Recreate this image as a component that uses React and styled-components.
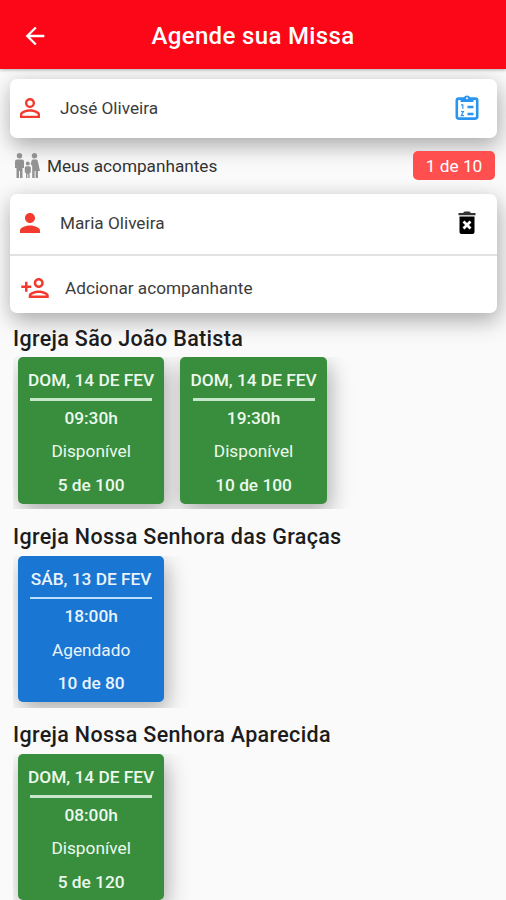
import React from "react";
import styled, { createGlobalStyle } from "styled-components";
import {
  MdArrowBack,
  MdPersonOutline,
  MdPerson,
  MdOutlinePersonAdd,
} from "react-icons/md";

const GlobalStyle = createGlobalStyle`
  * {
    box-sizing: border-box;
  }

  body {
    margin: 0;
    background: #fafafa;
    font-family: Roboto, "Liberation Sans", sans-serif;
    overflow: hidden;
  }
`;

const Page = styled.div`
  height: 900px;
  overflow: hidden;
  background: #fafafa;
`;

const Header = styled.header`
  position: relative;
  z-index: 1;
  height: 69px;
  padding: 2px 21px 0;
  display: grid;
  grid-template-columns: 28px 1fr 28px;
  align-items: center;
  background: #fc0718;
  color: #ffffff;
  box-shadow: 0 1px 3px rgba(0, 0, 0, 0.3);

  svg {
    display: block;
  }
`;

const Title = styled.h1`
  margin: 0;
  font-size: 24px;
  line-height: 28px;
  font-weight: 500;
  letter-spacing: 0.35px;
  text-align: center;
`;

const People = styled.div`
  padding: 10px 9px 0 10px;
`;

const Card = styled.div`
  border-radius: 7px;
  background: #ffffff;
  box-shadow: 2px 9px 22px rgba(0, 0, 0, 0.25), 0 2px 20px rgba(0, 0, 0, 0.1);
`;

const Row = styled.div`
  height: ${({ $height }) => $height}px;
  padding: ${({ $top }) => $top || 0}px 18px ${({ $bottom }) => $bottom || 0}px
    ${({ $indent }) => $indent}px;
  display: flex;
  align-items: center;
  gap: 15px;
  color: #3c3c3c;

  & + & {
    border-top: 2px solid #e2e2e2;
  }

  svg {
    flex: none;
  }
`;

const Name = styled.span`
  flex: 1;
  font-size: 17.2px;
`;

const Companions = styled.div`
  position: relative;
  height: 56px;
  padding: 0 2px 1px 4px;
  display: flex;
  align-items: center;
  gap: 7px;
  font-size: 17.2px;
  color: #333333;
`;

const Badge = styled.span`
  width: 82px;
  height: 29px;
  margin-left: auto;
  border-radius: 5px;
  display: flex;
  align-items: center;
  justify-content: center;
  background: #ff4f4f;
  color: #ffffff;
  font-size: 17.3px;
`;

const Churches = styled.main`
  padding: 10.9px 0 0 13px;
`;

const Church = styled.section`
  height: 198.3px;
`;

const ChurchName = styled.h2`
  position: relative;
  margin: 0;
  height: 33.5px;
  line-height: 29px;
  font-size: 21.5px;
  font-weight: 500;
  letter-spacing: 0.33px;
  color: #1c1c1c;
`;

const Slots = styled.div`
  width: 493px;
  height: 152px;
  padding: 0 5px;
  display: flex;
  gap: 16.1px;
  overflow: hidden;
`;

const Slot = styled.div`
  width: 146.3px;
  height: 146.3px;
  padding: 13px 12px 0;
  flex: none;
  display: flex;
  flex-direction: column;
  align-items: center;
  border-radius: 5px;
  background: ${({ $booked }) => ($booked ? "#1976d2" : "#388e3c")};
  color: ${({ $booked }) => ($booked ? "#e9f4fd" : "#edf9ee")};
  box-shadow: 4px 9px 22px rgba(0, 0, 0, 0.27), 0 2px 16px rgba(0, 0, 0, 0.06);
  font-size: 17.3px;
  line-height: 21px;
  white-space: nowrap;
`;

const Day = styled.div`
  font-weight: 500;
`;

const Rule = styled.div`
  width: 122px;
  height: 2.6px;
  margin: 7px 0;
  background: ${({ $booked }) => ($booked ? "#bbdefb" : "#c8e6c9")};
`;

const Time = styled.div`
  font-weight: 500;
`;

const Status = styled.div`
  margin: 12.5px 0;
`;

const Seats = styled.div`
  font-weight: 500;
`;

const churches = [
  {
    name: "Igreja São João Batista",
    slots: [
      { day: "DOM, 14 DE FEV", time: "09:30h", seats: "5 de 100" },
      { day: "DOM, 14 DE FEV", time: "19:30h", seats: "10 de 100" },
    ],
  },
  {
    name: "Igreja Nossa Senhora das Graças",
    slots: [
      { day: "SÁB, 13 DE FEV", time: "18:00h", seats: "10 de 80", booked: true },
    ],
  },
  {
    name: "Igreja Nossa Senhora Aparecida",
    slots: [{ day: "DOM, 14 DE FEV", time: "08:00h", seats: "5 de 120" }],
  },
];

const ClipboardIcon = () => (
  <svg width="24" height="26" viewBox="0 0 24 26" fill="none">
    <rect x="1.8" y="3.6" width="20.4" height="20" rx="2" stroke="#2a95f0" strokeWidth="2.6" />
    <path d="M5.500 3h3.300a3.300 3.300 0 0 1 6.400 0H18.500V7h-13z" fill="#2a95f0" />
    <circle cx="12" cy="3.200" r="1" fill="#fff" />
    <path d="M12.500 12h6M12.500 19h6" stroke="#2a95f0" strokeWidth="2.400" />
    <path d="M6 9.800h1.800v4M6 16.700h2.400l-2.200 4h2.800" stroke="#2a95f0" strokeWidth="1.200" />
  </svg>
);

const TrashIcon = () => (
  <svg width="24" height="24" viewBox="-3 0 24 24">
    <path d="M.5 2H5l1.500-1.500h5L13 2h4.500v2.200H.5z" fill="#333" />
    <path d="M1.500 5.500h15V21a2 2 0 0 1-2 2h-11a2 2 0 0 1-2-2z" fill="#000" />
    <path d="M5.500 10.500l7 7M12.500 10.500l-7 7" stroke="#fff" strokeWidth="2.800" />
  </svg>
);

const FamilyIcon = () => (
  <svg width="26" height="26" viewBox="0 0 26 26" fill="#929292">
    <circle cx="5.500" cy="2.800" r="2.700" />
    <path d="M3 6.500h5a2 2 0 0 1 2 2V15H8.500v10H6v-7H5v7H2.500V15H1V8.500a2 2 0 0 1 2-2z" />
    <circle cx="13.800" cy="10.500" r="2" />
    <path d="M12.300 13.200h3a1.500 1.500 0 0 1 1.500 1.500v5h-1.200V25h-1.400v-4h-.8v4H12v-5.300h-1.200v-5a1.500 1.500 0 0 1 1.500-1.500z" />
    <circle cx="20.500" cy="2.800" r="2.700" />
    <path d="M19 6.500h3c1 0 1.500.6 1.800 1.500L26 18h-2v7h-2.400v-7h-1v7h-2.400V13l-1.500-2 .8-3c.2-.9.600-1.500 1.500-1.500z" />
  </svg>
);

const ChurchSection = ({ name, slots }) => (
  <Church>
    <ChurchName>{name}</ChurchName>
    <Slots>
      {slots.map(({ day, time, seats, booked }) => (
        <Slot key={time} $booked={booked}>
          <Day>{day}</Day>
          <Rule $booked={booked} />
          <Time>{time}</Time>
          <Status>{booked ? "Agendado" : "Disponível"}</Status>
          <Seats>{seats}</Seats>
        </Slot>
      ))}
    </Slots>
  </Church>
);

const App = () => {
  return (
    <Page>
      <GlobalStyle />
      <Header>
        <MdArrowBack size={28} />
        <Title>Agende sua Missa</Title>
      </Header>

      <People>
        <Card>
          <Row $height={59} $indent={5} $bottom={1}>
            <MdPersonOutline size={30} color="#f23a2f" />
            <Name>José Oliveira</Name>
            <ClipboardIcon />
          </Row>
        </Card>

        <Companions>
          <FamilyIcon />
          Meus acompanhantes
          <Badge>1 de 10</Badge>
        </Companions>

        <Card>
          <Row $height={59.5} $indent={5} $bottom={2}>
            <MdPerson size={30} color="#f23a2f" />
            <Name>Maria Oliveira</Name>
            <TrashIcon />
          </Row>
          <Row $height={59.5} $indent={10} $top={7}>
            <MdOutlinePersonAdd size={30} color="#f23a2f" />
            <Name>Adcionar acompanhante</Name>
          </Row>
        </Card>
      </People>

      <Churches>
        {churches.map((church) => (
          <ChurchSection key={church.name} {...church} />
        ))}
      </Churches>
    </Page>
  );
};

export default App;
